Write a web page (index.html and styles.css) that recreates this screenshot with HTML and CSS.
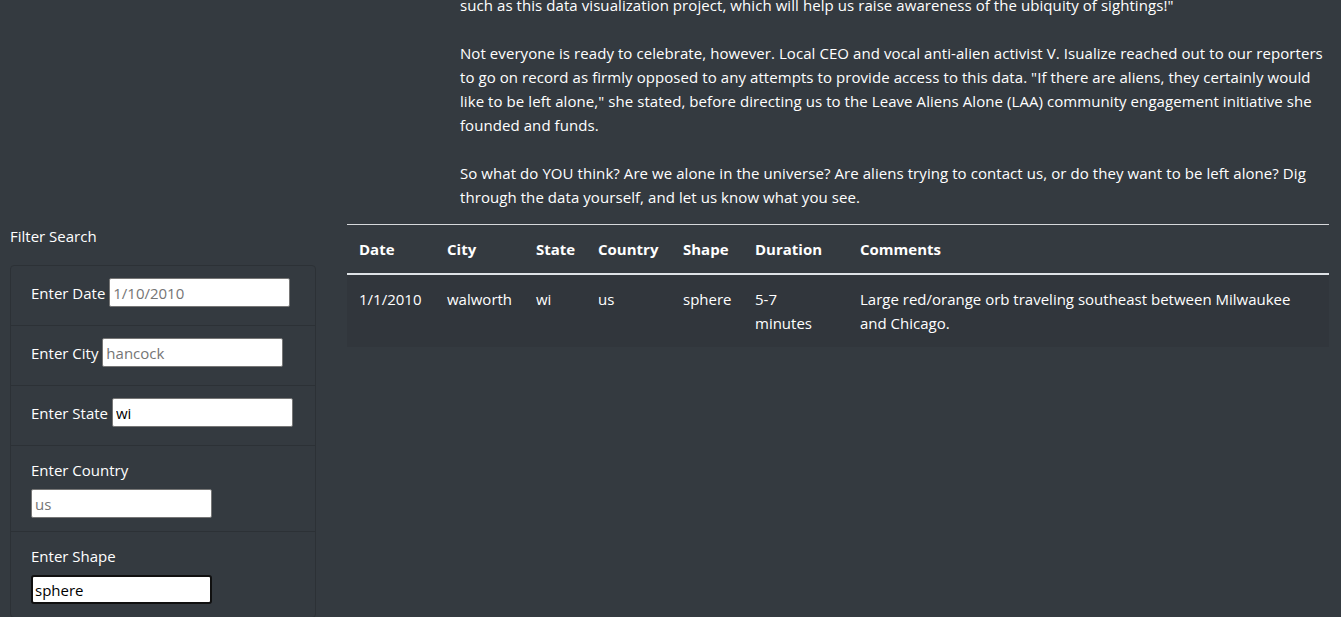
FILE: index.html
```html
<!DOCTYPE html>
<html lang="en">
<head>
<meta charset="utf-8">
<title>UFO Sightings</title>
<link rel="stylesheet" href="styles.css">
</head>
<body>
<article class="article">
  <p class="para">such as this data visualization project, which will help us raise awareness of the ubiquity of sightings!"</p>
  <p class="para">Not everyone is ready to celebrate, however. Local CEO and vocal anti-alien activist V. Isualize reached out to our reporters to go on record as firmly opposed to any attempts to provide access to this data. "If there are aliens, they certainly would like to be left alone," she stated, before directing us to the Leave Aliens Alone (LAA) community engagement initiative she founded and funds.</p>
  <p class="para">So what do YOU think? Are we alone in the universe? Are aliens trying to contact us, or do they want to be left alone? Dig through the data yourself, and let us know what you see.</p>
</article>
<div class="main">
  <aside class="sidebar">
    <div class="filter-title">Filter Search</div>
    <ul class="filters">
      <li class="filter"><label class="filter-label" for="datetime">Enter Date</label> <input class="filter-input" id="datetime" type="text" placeholder="1/10/2010"></li>
      <li class="filter"><label class="filter-label" for="city">Enter City</label> <input class="filter-input" id="city" type="text" placeholder="hancock"></li>
      <li class="filter"><label class="filter-label" for="state">Enter State</label> <input class="filter-input" id="state" type="text" value="wi"></li>
      <li class="filter filter--stacked"><label class="filter-label" for="country">Enter Country</label><input class="filter-input" id="country" type="text" placeholder="us"></li>
      <li class="filter filter--stacked"><label class="filter-label" for="shape">Enter Shape</label><input class="filter-input filter-input--focus" id="shape" type="text" value="sphere"></li>
    </ul>
  </aside>
  <section class="results">
    <table class="ufo-table">
      <colgroup>
        <col class="c-date"><col class="c-city"><col class="c-state"><col class="c-country"><col class="c-shape"><col class="c-duration"><col class="c-comments">
      </colgroup>
      <thead>
        <tr><th>Date</th><th>City</th><th>State</th><th>Country</th><th>Shape</th><th>Duration</th><th>Comments</th></tr>
      </thead>
      <tbody>
        <tr><td>1/1/2010</td><td>walworth</td><td>wi</td><td>us</td><td>sphere</td><td>5-7 minutes</td><td>Large red/orange orb traveling southeast between Milwaukee and Chicago.</td></tr>
      </tbody>
    </table>
  </section>
</div>
</body>
</html>
```
FILE: styles.css
```css
* { box-sizing: border-box; }
html, body { height: 100%; }
body {
  margin: 0;
  background: #343a40;
  color: #fff;
  font-family: "Open Sans", "Noto Sans", sans-serif;
  font-size: 15px;
  line-height: 24px;
  overflow: hidden;
}
.article {
  margin-top: -7px;
  padding: 0 12px 0 460px;
}
.para {
  margin: 0 0 24px;
  letter-spacing: 0.07px;
}
.para:last-child { margin-bottom: 15px; }
.main {
  display: flex;
  gap: 31px;
  padding: 0 12px 0 10px;
}
.sidebar {
  width: 306px;
  flex: none;
}
.filter-title {
  margin-bottom: 17px;
}
.filters {
  list-style: none;
  margin: 0;
  padding: 0;
  border: 1px solid #2c3136;
  border-radius: 4px;
}
.filter {
  padding: 12px 20px 18px;
  border-top: 1px solid #2c3136;
  white-space: nowrap;
}
.filter:first-child { border-top: 0; }
.filter--stacked { padding-bottom: 13px; }
.filter--stacked .filter-label { display: block; }
.filter--stacked .filter-input { margin-top: 7px; }
.filter-label { vertical-align: middle; }
.filter-input {
  width: 181px;
  height: 29px;
  padding: 1px 3px;
  border: 1px solid #767676;
  border-radius: 2px;
  background: #fff;
  color: #000;
  font: inherit;
  vertical-align: middle;
}
.filter-input::placeholder { color: #757575; }
.filter-input--focus {
  border: 2px solid #101010;
  border-radius: 3px;
  padding: 0 2px;
}
.results {
  flex: 1;
  border-top: 1px solid #d6d8db;
}
.ufo-table {
  width: 100%;
  table-layout: fixed;
  border-collapse: collapse;
}
.c-date { width: 88px; }
.c-city { width: 89px; }
.c-state { width: 62px; }
.c-country { width: 85px; }
.c-shape { width: 72px; }
.c-duration { width: 105px; }
.ufo-table th,
.ufo-table td {
  padding: 12px;
  text-align: left;
  vertical-align: top;
}
.ufo-table th {
  font-weight: 700;
  border-bottom: 2px solid #dee2e6;
}
.ufo-table tbody tr {
  background: #31363c;
}
```
